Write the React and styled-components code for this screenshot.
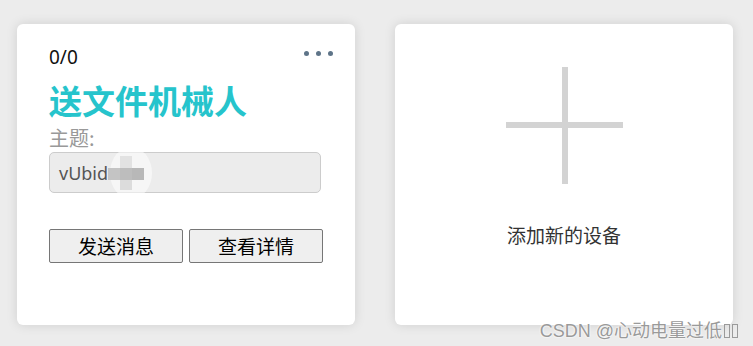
// Device dashboard: one device card and an "add device" card
import React from "react";
import styled, { createGlobalStyle } from "styled-components";

const GlobalStyle = createGlobalStyle`
  html, body {
    margin: 0;
    padding: 0;
    background: #ececec;
  }
  body {
    font-family: "Noto Sans", "Noto Sans CJK SC", sans-serif;
  }
`;

const Page = styled.div`
  position: relative;
  width: 753px;
  height: 346px;
  box-sizing: border-box;
  padding: 24px 0 0 17px;
  display: flex;
  gap: 40px;
  align-items: flex-start;
`;

const Card = styled.div`
  position: relative;
  width: 338px;
  height: 301px;
  box-sizing: border-box;
  background: #fff;
  border-radius: 6px;
  box-shadow: 0 0 12px rgba(0, 0, 0, 0.12);
  display: flex;
  flex-direction: column;
  align-items: ${(p) => (p.$center ? "center" : "stretch")};
  padding: ${(p) => (p.$center ? "43px 0 0" : "22px 22px 0 32px")};
`;

const HeaderRow = styled.div`
  display: flex;
  justify-content: space-between;
  align-items: center;
  height: 20px;
`;

const Counter = styled.span`
  font-size: 19px;
  line-height: 20px;
  color: #111;
  margin-top: 2px;
`;

const Dots = styled.div`
  display: flex;
  gap: 7px;
  margin-top: -6px;
`;

const Dot = styled.span`
  width: 5px;
  height: 5px;
  border-radius: 50%;
  background: #5e7488;
`;

const Title = styled.h2`
  margin: 14px 0 0;
  font-family: "Noto Sans CJK SC", sans-serif;
  font-size: 33px;
  line-height: 40px;
  font-weight: 700;
  color: #26c4cc;
`;

const Label = styled.div`
  margin-top: 6px;
  font-family: "Noto Sans CJK SC", sans-serif;
  font-size: 20px;
  line-height: 24px;
  color: #999;
`;

const TopicBox = styled.div`
  position: relative;
  margin-top: 2px;
  width: 272px;
  height: 41px;
  box-sizing: border-box;
  background: #ececec;
  border: 1px solid #ccc;
  border-radius: 5px;
  padding-left: 9px;
  display: flex;
  align-items: center;
  font-size: 18px;
  color: #555;
`;

// pixelated mosaic that hides part of the topic
const Mosaic = styled.span`
  position: absolute;
  left: 60px;
  top: -6px;
  width: 42px;
  height: 52px;
  border-radius: 50%;
  background: rgba(255, 255, 255, 0.55);
`;

const Pixel = styled.span`
  position: absolute;
  left: ${(p) => p.$x}px;
  top: ${(p) => p.$y}px;
  width: ${(p) => p.$w}px;
  height: ${(p) => p.$h}px;
  background: ${(p) => p.$c};
`;

const ButtonRow = styled.div`
  display: flex;
  gap: 6px;
  margin-top: 36px;
`;

const Button = styled.button`
  width: 134px;
  height: 34px;
  box-sizing: border-box;
  background: #efefef;
  border: 1px solid #767676;
  border-radius: 2px;
  font-family: "Noto Sans CJK SC", sans-serif;
  font-size: 19px;
  line-height: 24px;
  color: #000;
  padding: 0;
`;

const PlusIcon = styled.div`
  position: relative;
  width: 117px;
  height: 117px;
  &::before,
  &::after {
    content: "";
    position: absolute;
    background: #d3d3d3;
  }
  &::before {
    left: 56px;
    top: 0;
    width: 6px;
    height: 117px;
  }
  &::after {
    left: 0;
    top: 55px;
    width: 117px;
    height: 6px;
  }
`;

const AddText = styled.div`
  margin-top: 39px;
  font-family: "Noto Sans CJK SC", sans-serif;
  font-size: 19px;
  line-height: 24px;
  color: #333;
`;

const Watermark = styled.div`
  position: absolute;
  right: 15px;
  bottom: 4px;
  display: flex;
  align-items: center;
  font-family: "Liberation Sans", "Noto Sans CJK SC", sans-serif;
  font-size: 18px;
  line-height: 22px;
  color: #9a9a9a;
  text-shadow: 0 0 2px #fff, 0 0 2px #fff;
`;

const MissingGlyph = styled.span`
  display: inline-block;
  width: 6px;
  height: 14px;
  margin-left: 2px;
  border: 1px solid #9a9a9a;
  box-sizing: border-box;
`;

export default function App() {
  return (
    <>
      <GlobalStyle />
      <Page>
        <Card>
          <HeaderRow>
            <Counter>0/0</Counter>
            <Dots>
              <Dot />
              <Dot />
              <Dot />
            </Dots>
          </HeaderRow>
          <Title>送文件机械人</Title>
          <Label>主题:</Label>
          <TopicBox>
            vUbid
            <Mosaic />
            <Pixel $x={58} $y={15} $w={12} $h={12} $c="#c4c4c4" />
            <Pixel $x={70} $y={15} $w={12} $h={12} $c="#bdbdbd" />
            <Pixel $x={82} $y={15} $w={12} $h={12} $c="#b8b8b8" />
            <Pixel $x={70} $y={3} $w={12} $h={12} $c="#e2e2e2" />
            <Pixel $x={70} $y={27} $w={12} $h={10} $c="#dcdcdc" />
          </TopicBox>
          <ButtonRow>
            <Button>发送消息</Button>
            <Button>查看详情</Button>
          </ButtonRow>
        </Card>
        <Card $center>
          <PlusIcon />
          <AddText>添加新的设备</AddText>
        </Card>
        <Watermark>
          CSDN @心动电量过低
          <MissingGlyph />
          <MissingGlyph />
        </Watermark>
      </Page>
    </>
  );
}
